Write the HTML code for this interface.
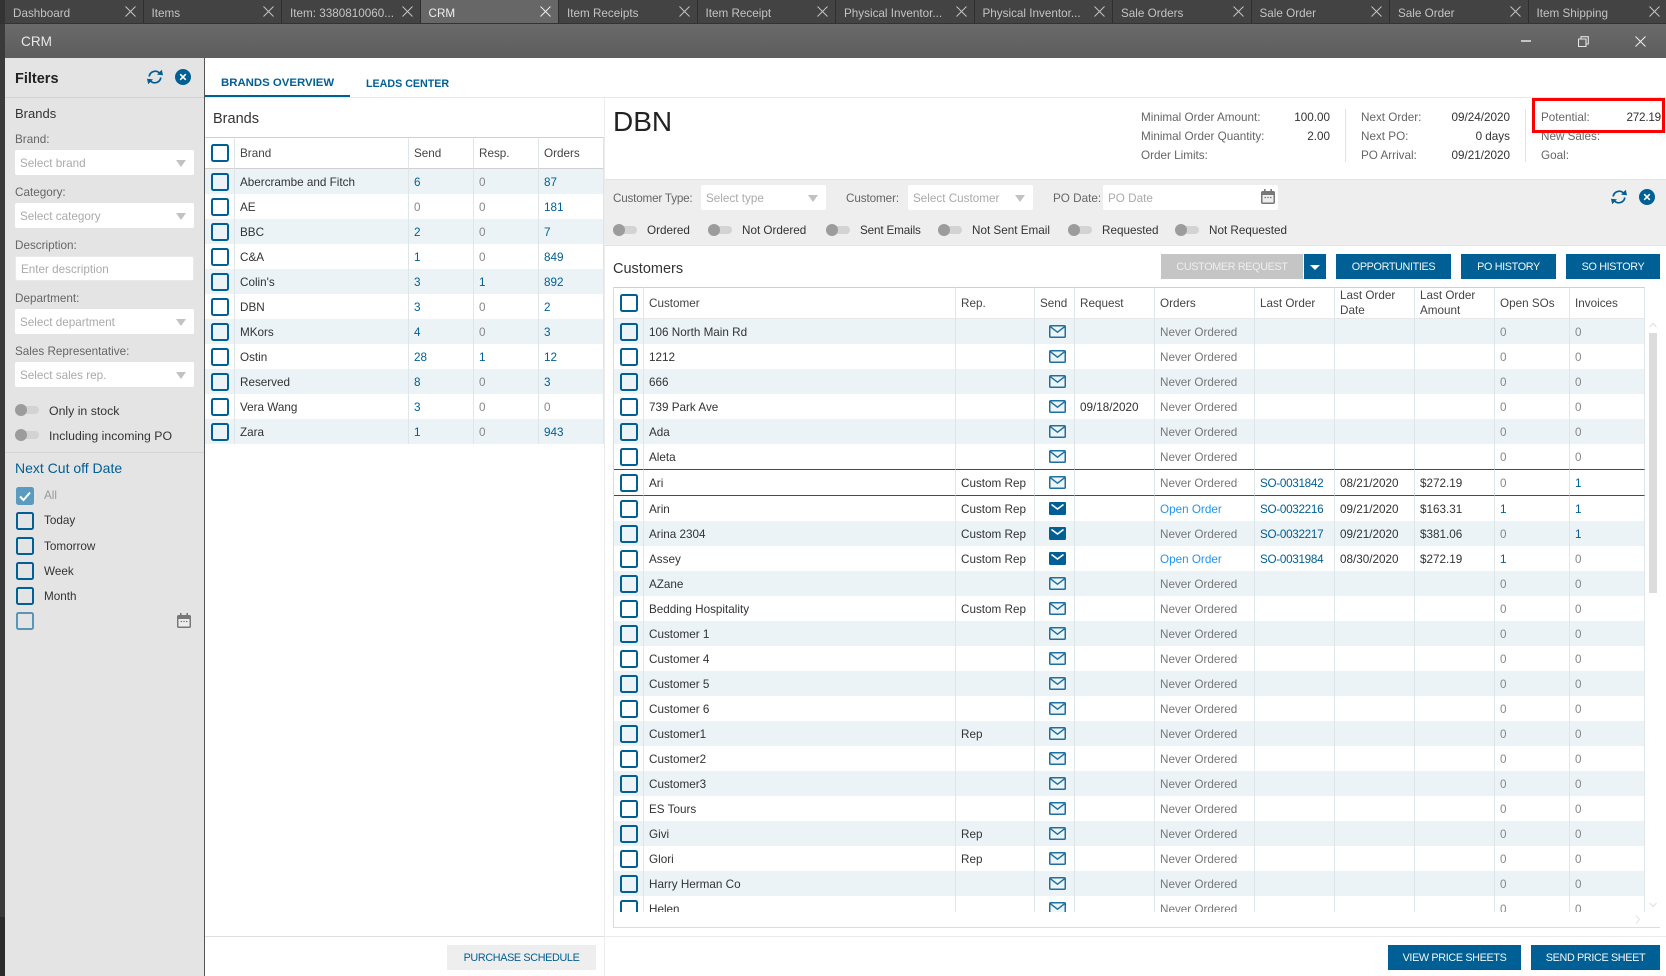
<!DOCTYPE html>
<html><head><meta charset="utf-8"><title>CRM</title>
<style>
*{box-sizing:border-box;margin:0;padding:0}
html,body{width:1666px;height:976px;overflow:hidden;background:#fff;font-family:"Liberation Sans",Arial,sans-serif;font-size:11.7px;color:#333}
.a{position:absolute}
.t{position:absolute;white-space:nowrap;line-height:16px;margin-top:1px}
.tab{position:absolute;top:0;height:23px;width:138.5px;background:#434343;border-right:1px solid #2e2e2e;color:#c4c4c4;font-size:11.7px;line-height:27px;padding-left:8px;white-space:nowrap}
.tab svg{position:absolute;right:7px;top:6px}
.tab.on{background:#676767;color:#eee}
.sel{position:absolute;background:#fff;border-radius:2px;height:25px;color:#aaa;line-height:27px;padding-left:5px;white-space:nowrap}
.sel:after{content:"";position:absolute;right:8px;top:10px;border-left:5px solid transparent;border-right:5px solid transparent;border-top:7px solid #c2c2c2}
.sel.n:after{display:none}
.lb{color:#666}
.side{font-size:12.3px}
.tg{position:absolute;width:24px;height:8px;background:#d3d3d3;border-radius:4px}
.tg:before{content:"";position:absolute;left:0;top:-2.5px;width:12px;height:12px;border-radius:50%;background:#9c9c9c}
.c{display:inline-block;width:18px;height:18px;border:2px solid #005f94;border-radius:2.5px;vertical-align:middle}
.cb{position:absolute;width:18px;height:18px;border:2px solid #005f94;border-radius:2.5px}
table{border-collapse:separate;border-spacing:0;table-layout:fixed;position:absolute}
td,th{font-weight:normal;text-align:left;padding:0 0 0 5px;height:25px;border-right:1px solid #dfe6ea;white-space:nowrap;overflow:hidden;color:#333}
td{padding-top:2px}
th{height:31px;color:#444;line-height:15px;border-top:1px solid #d0d0d0;border-bottom:1px solid #d0d0d0;white-space:normal}
.br th{height:32px;padding-top:1px}
.cu th{border-bottom-color:#e4e8ea}
td:first-child,th:first-child{padding:0;text-align:center;line-height:0}
tr.s td{background:#ebf3f7}
td.l{color:#005f94}td.g{color:#888}td.n{color:#777}td.o{color:#2196f0}
td.q{letter-spacing:-.3px}
tr.x td{height:27px;border-top:1px solid #005f94;border-bottom:1px solid #005f94}
td svg{display:block;margin:0 auto;position:relative;top:-1px}
.b{position:absolute;height:25px;background:#006096;color:#f2f6f9;text-align:center;line-height:26px;font-size:10.8px;letter-spacing:-.35px;white-space:nowrap}
</style></head><body>
<svg width="0" height="0" style="position:absolute">
<defs>
<symbol id="m" viewBox="0 0 17 13"><rect x=".75" y=".75" width="15.5" height="11.5" rx="1" fill="#eef5f9" stroke="#1f6f9f" stroke-width="1.5"/><path d="M1.5 1.8L8.5 7.2L15.5 1.8" fill="none" stroke="#1f6f9f" stroke-width="1.4"/></symbol>
<symbol id="f" viewBox="0 0 17 13"><rect width="17" height="13" rx="1.2" fill="#005f94"/><path d="M2.5 2.5L8.5 7L14.5 2.5" fill="none" stroke="#fff" stroke-width="1.6"/></symbol>
<symbol id="r" viewBox="0 0 18 16"><path d="M3.2 7.5A6 6 0 0 1 13.6 4.2" fill="none" stroke="#005f94" stroke-width="1.7"/><path d="M14.8 8.5A6 6 0 0 1 4.4 11.8" fill="none" stroke="#005f94" stroke-width="1.7"/><path d="M11 5.6L17 6.2L15.8 .8Z" fill="#005f94"/><path d="M7 10.4L1 9.8L2.2 15.2Z" fill="#005f94"/></symbol>
<symbol id="o" viewBox="0 0 16 16"><circle cx="8" cy="8" r="8" fill="#005f94"/><path d="M5.2 5.2L10.8 10.8M10.8 5.2L5.2 10.8" stroke="#fff" stroke-width="1.6"/></symbol>
<symbol id="k" viewBox="0 0 14 15"><rect x=".75" y="2.75" width="12.5" height="11.5" rx="1" fill="#eee" stroke="#777" stroke-width="1.5"/><rect x="1" y="2.5" width="12" height="3.5" fill="#777"/><rect x="3" y="0" width="1.6" height="3" fill="#777"/><rect x="9.4" y="0" width="1.6" height="3" fill="#777"/><path d="M3.5 8.5h1.5M6.3 8.5h1.5M9 8.5h1.5" stroke="#777" stroke-width="1.3"/></symbol>
<symbol id="y" viewBox="0 0 11 11"><path d="M.5.5L10.5 10.5M10.5.5L.5 10.5" stroke="currentColor" stroke-width="1"/></symbol>
</defs></svg>

<div class="a" style="left:0;top:0;width:5px;height:976px;background:#3a3a3a"></div>
<div class="a" style="left:0;top:917px;width:5px;height:59px;background:#2b2b2b"></div>

<!-- tabs -->
<div class="a" style="left:0;top:0;width:1666px;height:24px;background:#333"></div>
<div class="tab" style="left:5px">Dashboard<svg width="11" height="11"><use href="#y"/></svg></div>
<div class="tab" style="left:143.5px">Items<svg width="11" height="11"><use href="#y"/></svg></div>
<div class="tab" style="left:282px">Item: 3380810060...<svg width="11" height="11"><use href="#y"/></svg></div>
<div class="tab on" style="left:420.5px">CRM<svg width="11" height="11"><use href="#y"/></svg></div>
<div class="tab" style="left:559px">Item Receipts<svg width="11" height="11"><use href="#y"/></svg></div>
<div class="tab" style="left:697.5px">Item Receipt<svg width="11" height="11"><use href="#y"/></svg></div>
<div class="tab" style="left:836px">Physical Inventor...<svg width="11" height="11"><use href="#y"/></svg></div>
<div class="tab" style="left:974.5px">Physical Inventor...<svg width="11" height="11"><use href="#y"/></svg></div>
<div class="tab" style="left:1113px">Sale Orders<svg width="11" height="11"><use href="#y"/></svg></div>
<div class="tab" style="left:1251.5px">Sale Order<svg width="11" height="11"><use href="#y"/></svg></div>
<div class="tab" style="left:1390px">Sale Order<svg width="11" height="11"><use href="#y"/></svg></div>
<div class="tab" style="left:1528.5px;border-right:0">Item Shipping<svg width="11" height="11"><use href="#y"/></svg></div>

<!-- title bar -->
<div class="a" style="left:5px;top:24px;width:1661px;height:34px;background:linear-gradient(#6a6a6a,#5d5d5d)"></div>
<div class="t" style="left:21px;top:33px;font-size:13.6px;color:#e8e8e8">CRM</div>
<div class="a" style="left:1521px;top:40px;width:10px;height:1.5px;background:#c4c4c4"></div>
<svg class="a" style="left:1578px;top:36px" width="11" height="11"><path d="M.5 3h7.5v7.5H.5zM3 3V.7h7.3V8H8" fill="none" stroke="#e4e4e4" stroke-width="1.1"/></svg>
<svg class="a" style="left:1635px;top:36px;color:#f0f0f0" width="11" height="11"><use href="#y"/></svg>

<!-- sidebar -->
<div class="a" style="left:5px;top:58px;width:200px;height:918px;background:#e4e4e4;border-right:1px solid #555"></div>
<div class="a" style="left:5px;top:97px;width:199px;height:1px;background:#d2d2d2"></div>
<div class="t" style="left:15px;top:70px;font-size:14.5px;font-weight:bold;color:#222">Filters</div>
<svg class="a" style="left:146px;top:69px" width="18" height="16"><use href="#r"/></svg>
<svg class="a" style="left:175px;top:69px" width="16" height="16"><use href="#o"/></svg>
<div class="t" style="left:15px;top:105px;font-size:13px;color:#333">Brands</div>
<div class="t lb" style="left:15px;top:131px">Brand:</div>
<div class="sel" style="left:15px;top:150px;width:179px">Select brand</div>
<div class="t lb" style="left:15px;top:184px">Category:</div>
<div class="sel" style="left:15px;top:203px;width:179px">Select category</div>
<div class="t lb" style="left:15px;top:237px">Description:</div>
<div class="sel n" style="left:15px;top:256px;width:179px;border:1px solid #e9e9e9;line-height:25px">Enter description</div>
<div class="t lb" style="left:15px;top:290px">Department:</div>
<div class="sel" style="left:15px;top:309px;width:179px">Select department</div>
<div class="t lb" style="left:15px;top:343px">Sales Representative:</div>
<div class="sel" style="left:15px;top:362px;width:179px">Select sales rep.</div>
<div class="tg" style="left:15px;top:406px"></div>
<div class="t side" style="left:49px;top:402px">Only in stock</div>
<div class="tg" style="left:15px;top:431px"></div>
<div class="t side" style="left:49px;top:427px">Including incoming PO</div>
<div class="a" style="left:5px;top:452px;width:199px;height:1px;background:#d4d4d4"></div>
<div class="t" style="left:15px;top:459px;font-size:14px;color:#005f94">Next Cut off Date</div>
<div class="cb" style="left:16px;top:487px;background:#5b9bc0;border-color:#5b9bc0"><svg class="a" style="left:1px;top:2px" width="12" height="11"><path d="M1 5.5L4.5 9L11 1.5" fill="none" stroke="#fff" stroke-width="2"/></svg></div>
<div class="t" style="left:44px;top:487px;color:#999">All</div>
<div class="cb" style="left:16px;top:512px"></div><div class="t" style="left:44px;top:512px">Today</div>
<div class="cb" style="left:16px;top:537px"></div><div class="t" style="left:44px;top:538px">Tomorrow</div>
<div class="cb" style="left:16px;top:562px"></div><div class="t" style="left:44px;top:563px">Week</div>
<div class="cb" style="left:16px;top:587px"></div><div class="t" style="left:44px;top:588px">Month</div>
<div class="cb" style="left:16px;top:612px;opacity:.6"></div>
<svg class="a" style="left:177px;top:613px" width="14" height="15"><use href="#k"/></svg>

<!-- main tabs -->
<div class="t" style="left:221px;top:74px;font-weight:bold;font-size:11.4px;color:#005f94">BRANDS OVERVIEW</div>
<div class="t" style="left:366px;top:75px;font-weight:bold;font-size:10.7px;color:#005f94">LEADS CENTER</div>
<div class="a" style="left:205px;top:97px;width:1461px;height:1px;background:#e8e8e8"></div>
<div class="a" style="left:205px;top:95px;width:145px;height:2px;background:#005f94"></div>
<div class="a" style="left:604px;top:98px;width:1px;height:878px;background:#ececec"></div>

<!-- brands -->
<div class="t" style="left:213px;top:110px;font-size:14.5px;color:#333">Brands</div>
<table class="br" style="left:205px;top:137px;width:399px">
<colgroup><col style="width:30px"><col style="width:174px"><col style="width:65px"><col style="width:65px"><col style="width:65px"></colgroup>
<tr><th><i class="c"></i></th><th>Brand</th><th>Send</th><th>Resp.</th><th>Orders</th></tr>
<tr class="s"><td><i class="c"></i></td><td>Abercrambe and Fitch</td><td class="l">6</td><td class="g">0</td><td class="l">87</td></tr>
<tr><td><i class="c"></i></td><td>AE</td><td class="g">0</td><td class="g">0</td><td class="l">181</td></tr>
<tr class="s"><td><i class="c"></i></td><td>BBC</td><td class="l">2</td><td class="g">0</td><td class="l">7</td></tr>
<tr><td><i class="c"></i></td><td>C&amp;A</td><td class="l">1</td><td class="g">0</td><td class="l">849</td></tr>
<tr class="s"><td><i class="c"></i></td><td>Colin's</td><td class="l">3</td><td class="l">1</td><td class="l">892</td></tr>
<tr><td><i class="c"></i></td><td>DBN</td><td class="l">3</td><td class="g">0</td><td class="l">2</td></tr>
<tr class="s"><td><i class="c"></i></td><td>MKors</td><td class="l">4</td><td class="g">0</td><td class="l">3</td></tr>
<tr><td><i class="c"></i></td><td>Ostin</td><td class="l">28</td><td class="l">1</td><td class="l">12</td></tr>
<tr class="s"><td><i class="c"></i></td><td>Reserved</td><td class="l">8</td><td class="g">0</td><td class="l">3</td></tr>
<tr><td><i class="c"></i></td><td>Vera Wang</td><td class="l">3</td><td class="g">0</td><td class="g">0</td></tr>
<tr class="s"><td><i class="c"></i></td><td>Zara</td><td class="l">1</td><td class="g">0</td><td class="l">943</td></tr>
</table>
<div class="a" style="left:205px;top:936px;width:399px;height:1px;background:#dedede"></div>
<div class="b" style="left:447px;top:945px;width:149px;background:#eee;color:#005f94">PURCHASE SCHEDULE</div>

<!-- DBN header -->
<div class="t" style="left:613px;top:104px;font-size:28px;line-height:34px;color:#222">DBN</div>
<div class="t lb" style="left:1141px;top:109px">Minimal Order Amount:</div>
<div class="t lb" style="left:1141px;top:128px">Minimal Order Quantity:</div>
<div class="t lb" style="left:1141px;top:147px">Order Limits:</div>
<div class="t" style="right:336px;top:109px">100.00</div>
<div class="t" style="right:336px;top:128px">2.00</div>
<div class="a" style="left:1345px;top:109px;width:1px;height:53px;background:#e2e2e2"></div>
<div class="t lb" style="left:1361px;top:109px">Next Order:</div>
<div class="t lb" style="left:1361px;top:128px">Next PO:</div>
<div class="t lb" style="left:1361px;top:147px">PO Arrival:</div>
<div class="t" style="right:156px;top:109px">09/24/2020</div>
<div class="t" style="right:156px;top:128px">0 days</div>
<div class="t" style="right:156px;top:147px">09/21/2020</div>
<div class="a" style="left:1525px;top:109px;width:1px;height:53px;background:#e2e2e2"></div>
<div class="t lb" style="left:1541px;top:109px">Potential:</div>
<div class="t lb" style="left:1541px;top:128px">New Sales:</div>
<div class="t lb" style="left:1541px;top:147px">Goal:</div>
<div class="t" style="right:5px;top:109px;letter-spacing:-.2px">272.19</div>
<div class="a" style="left:1532px;top:98px;width:133px;height:35px;border:3px solid #f00"></div>

<!-- filter bar -->
<div class="a" style="left:605px;top:179px;width:1061px;height:67px;background:#eee;border-top:1px solid #e4e4e4;border-bottom:1px solid #e4e4e4"></div>
<div class="t lb" style="left:613px;top:190px;letter-spacing:-.2px">Customer Type:</div>
<div class="sel" style="left:701px;top:185px;width:125px">Select type</div>
<div class="t lb" style="left:846px;top:190px;letter-spacing:-.1px">Customer:</div>
<div class="sel" style="left:908px;top:185px;width:125px">Select Customer</div>
<div class="t lb" style="left:1053px;top:190px">PO Date:</div>
<div class="sel n" style="left:1103px;top:185px;width:175px">PO Date</div>
<svg class="a" style="left:1261px;top:189px" width="14" height="15"><use href="#k"/></svg>
<svg class="a" style="left:1610px;top:189px" width="18" height="16"><use href="#r"/></svg>
<svg class="a" style="left:1639px;top:189px" width="16" height="16"><use href="#o"/></svg>
<div class="tg" style="left:613px;top:226px"></div><div class="t" style="left:647px;top:222px">Ordered</div>
<div class="tg" style="left:708px;top:226px"></div><div class="t" style="left:742px;top:222px">Not Ordered</div>
<div class="tg" style="left:826px;top:226px"></div><div class="t" style="left:860px;top:222px;letter-spacing:-.15px">Sent Emails</div>
<div class="tg" style="left:938px;top:226px"></div><div class="t" style="left:972px;top:222px">Not Sent Email</div>
<div class="tg" style="left:1068px;top:226px"></div><div class="t" style="left:1102px;top:222px">Requested</div>
<div class="tg" style="left:1175px;top:226px"></div><div class="t" style="left:1209px;top:222px">Not Requested</div>

<!-- customers -->
<div class="t" style="left:613px;top:260px;font-size:14.5px;color:#333">Customers</div>
<div class="b" style="left:1161px;top:254px;width:142px;background:#c5c5c5;color:#eee">CUSTOMER REQUEST</div>
<div class="b" style="left:1304px;top:254px;width:22px"><span class="a" style="left:6px;top:11px;border-left:5px solid transparent;border-right:5px solid transparent;border-top:5px solid #fff"></span></div>
<div class="b" style="left:1336px;top:254px;width:115px">OPPORTUNITIES</div>
<div class="b" style="left:1461px;top:254px;width:95px">PO HISTORY</div>
<div class="b" style="left:1566px;top:254px;width:94px">SO HISTORY</div>

<div class="a" style="left:613px;top:287px;width:1px;height:640px;background:#dcdcdc"></div>
<div class="a" style="left:613px;top:927px;width:1047px;height:1px;background:#dcdcdc"></div>
<div class="a" style="left:614px;top:287px;width:1032px;height:625px;overflow:hidden">
<table class="cu" style="left:0;top:0;width:1031px">
<colgroup><col style="width:30px"><col style="width:312px"><col style="width:79px"><col style="width:40px"><col style="width:80px"><col style="width:100px"><col style="width:80px"><col style="width:80px"><col style="width:80px"><col style="width:75px"><col style="width:75px"></colgroup>
<tr><th><i class="c"></i></th><th>Customer</th><th>Rep.</th><th>Send</th><th>Request</th><th>Orders</th><th>Last Order</th><th>Last Order Date</th><th>Last Order Amount</th><th>Open SOs</th><th>Invoices</th></tr>
<tr class="s"><td><i class="c"></i></td><td>106 North Main Rd</td><td></td><td><svg width="17" height="13"><use href="#m"/></svg></td><td></td><td class="n">Never Ordered</td><td></td><td></td><td></td><td class="g">0</td><td class="g">0</td></tr>
<tr><td><i class="c"></i></td><td>1212</td><td></td><td><svg width="17" height="13"><use href="#m"/></svg></td><td></td><td class="n">Never Ordered</td><td></td><td></td><td></td><td class="g">0</td><td class="g">0</td></tr>
<tr class="s"><td><i class="c"></i></td><td>666</td><td></td><td><svg width="17" height="13"><use href="#m"/></svg></td><td></td><td class="n">Never Ordered</td><td></td><td></td><td></td><td class="g">0</td><td class="g">0</td></tr>
<tr><td><i class="c"></i></td><td>739 Park Ave</td><td></td><td><svg width="17" height="13"><use href="#m"/></svg></td><td>09/18/2020</td><td class="n">Never Ordered</td><td></td><td></td><td></td><td class="g">0</td><td class="g">0</td></tr>
<tr class="s"><td><i class="c"></i></td><td>Ada</td><td></td><td><svg width="17" height="13"><use href="#m"/></svg></td><td></td><td class="n">Never Ordered</td><td></td><td></td><td></td><td class="g">0</td><td class="g">0</td></tr>
<tr><td><i class="c"></i></td><td>Aleta</td><td></td><td><svg width="17" height="13"><use href="#m"/></svg></td><td></td><td class="n">Never Ordered</td><td></td><td></td><td></td><td class="g">0</td><td class="g">0</td></tr>
<tr class="x"><td><i class="c"></i></td><td>Ari</td><td>Custom Rep</td><td><svg width="17" height="13"><use href="#m"/></svg></td><td></td><td class="n">Never Ordered</td><td class="l q">SO-0031842</td><td>08/21/2020</td><td>$272.19</td><td class="g">0</td><td class="l">1</td></tr>
<tr><td><i class="c"></i></td><td>Arin</td><td>Custom Rep</td><td><svg width="17" height="13"><use href="#f"/></svg></td><td></td><td class="o">Open Order</td><td class="l q">SO-0032216</td><td>09/21/2020</td><td>$163.31</td><td class="l">1</td><td class="l">1</td></tr>
<tr class="s"><td><i class="c"></i></td><td>Arina 2304</td><td>Custom Rep</td><td><svg width="17" height="13"><use href="#f"/></svg></td><td></td><td class="n">Never Ordered</td><td class="l q">SO-0032217</td><td>09/21/2020</td><td>$381.06</td><td class="g">0</td><td class="l">1</td></tr>
<tr><td><i class="c"></i></td><td>Assey</td><td>Custom Rep</td><td><svg width="17" height="13"><use href="#f"/></svg></td><td></td><td class="o">Open Order</td><td class="l q">SO-0031984</td><td>08/30/2020</td><td>$272.19</td><td class="l">1</td><td class="g">0</td></tr>
<tr class="s"><td><i class="c"></i></td><td>AZane</td><td></td><td><svg width="17" height="13"><use href="#m"/></svg></td><td></td><td class="n">Never Ordered</td><td></td><td></td><td></td><td class="g">0</td><td class="g">0</td></tr>
<tr><td><i class="c"></i></td><td>Bedding Hospitality</td><td>Custom Rep</td><td><svg width="17" height="13"><use href="#m"/></svg></td><td></td><td class="n">Never Ordered</td><td></td><td></td><td></td><td class="g">0</td><td class="g">0</td></tr>
<tr class="s"><td><i class="c"></i></td><td>Customer 1</td><td></td><td><svg width="17" height="13"><use href="#m"/></svg></td><td></td><td class="n">Never Ordered</td><td></td><td></td><td></td><td class="g">0</td><td class="g">0</td></tr>
<tr><td><i class="c"></i></td><td>Customer 4</td><td></td><td><svg width="17" height="13"><use href="#m"/></svg></td><td></td><td class="n">Never Ordered</td><td></td><td></td><td></td><td class="g">0</td><td class="g">0</td></tr>
<tr class="s"><td><i class="c"></i></td><td>Customer 5</td><td></td><td><svg width="17" height="13"><use href="#m"/></svg></td><td></td><td class="n">Never Ordered</td><td></td><td></td><td></td><td class="g">0</td><td class="g">0</td></tr>
<tr><td><i class="c"></i></td><td>Customer 6</td><td></td><td><svg width="17" height="13"><use href="#m"/></svg></td><td></td><td class="n">Never Ordered</td><td></td><td></td><td></td><td class="g">0</td><td class="g">0</td></tr>
<tr class="s"><td><i class="c"></i></td><td>Customer1</td><td>Rep</td><td><svg width="17" height="13"><use href="#m"/></svg></td><td></td><td class="n">Never Ordered</td><td></td><td></td><td></td><td class="g">0</td><td class="g">0</td></tr>
<tr><td><i class="c"></i></td><td>Customer2</td><td></td><td><svg width="17" height="13"><use href="#m"/></svg></td><td></td><td class="n">Never Ordered</td><td></td><td></td><td></td><td class="g">0</td><td class="g">0</td></tr>
<tr class="s"><td><i class="c"></i></td><td>Customer3</td><td></td><td><svg width="17" height="13"><use href="#m"/></svg></td><td></td><td class="n">Never Ordered</td><td></td><td></td><td></td><td class="g">0</td><td class="g">0</td></tr>
<tr><td><i class="c"></i></td><td>ES Tours</td><td></td><td><svg width="17" height="13"><use href="#m"/></svg></td><td></td><td class="n">Never Ordered</td><td></td><td></td><td></td><td class="g">0</td><td class="g">0</td></tr>
<tr class="s"><td><i class="c"></i></td><td>Givi</td><td>Rep</td><td><svg width="17" height="13"><use href="#m"/></svg></td><td></td><td class="n">Never Ordered</td><td></td><td></td><td></td><td class="g">0</td><td class="g">0</td></tr>
<tr><td><i class="c"></i></td><td>Glori</td><td>Rep</td><td><svg width="17" height="13"><use href="#m"/></svg></td><td></td><td class="n">Never Ordered</td><td></td><td></td><td></td><td class="g">0</td><td class="g">0</td></tr>
<tr class="s"><td><i class="c"></i></td><td>Harry Herman Co</td><td></td><td><svg width="17" height="13"><use href="#m"/></svg></td><td></td><td class="n">Never Ordered</td><td></td><td></td><td></td><td class="g">0</td><td class="g">0</td></tr>
<tr><td><i class="c"></i></td><td>Helen</td><td></td><td><svg width="17" height="13"><use href="#m"/></svg></td><td></td><td class="n">Never Ordered</td><td></td><td></td><td></td><td class="g">0</td><td class="g">0</td></tr>
</table>
</div>
<!-- scrollbar -->
<div class="a" style="left:1649px;top:333px;width:8px;height:260px;background:#dcdcdc"></div>
<svg class="a" style="left:1649px;top:322px" width="8" height="6"><path d="M.5 5L4 1.5L7.5 5" fill="none" stroke="#ddd"/></svg>
<svg class="a" style="left:1649px;top:902px" width="8" height="6"><path d="M.5 1L4 4.5L7.5 1" fill="none" stroke="#ddd"/></svg>
<svg class="a" style="left:1635px;top:915px" width="6" height="9"><path d="M1 .5L4.5 4.5L1 8.5" fill="none" stroke="#e4e4e4"/></svg>

<!-- footer -->
<div class="a" style="left:605px;top:936px;width:1061px;height:1px;background:#ececec"></div>
<div class="b" style="left:1388px;top:945px;width:133px">VIEW PRICE SHEETS</div>
<div class="b" style="left:1531px;top:945px;width:129px">SEND PRICE SHEET</div>
</body></html>
